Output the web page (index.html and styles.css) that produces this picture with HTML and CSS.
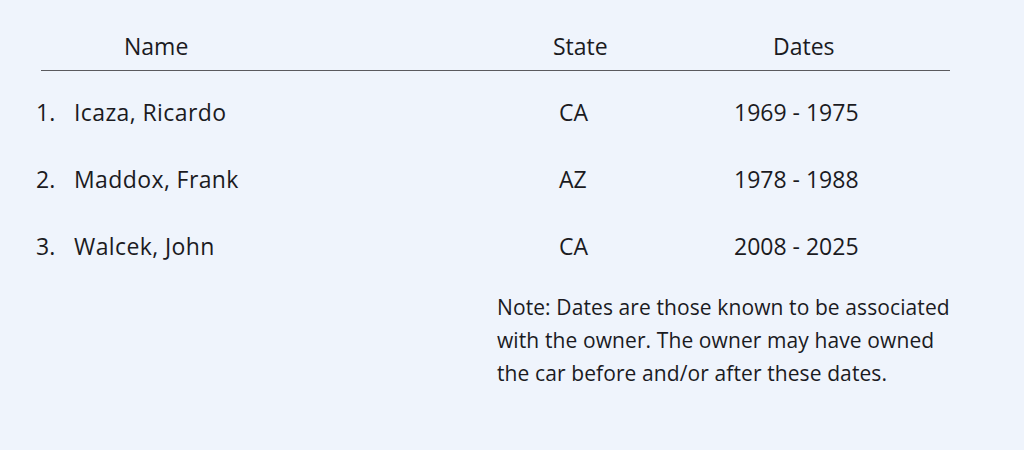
FILE: index.html
```html
<!DOCTYPE html>
<html>
<head>
<meta charset="utf-8">
<link rel="stylesheet" href="styles.css">
</head>
<body>
<div class="page">
  <div class="owners">
    <div class="head">
      <div class="h-name">Name</div>
      <div class="h-state">State</div>
      <div class="h-dates">Dates</div>
    </div>
    <div class="rule"></div>
    <div class="row"><span class="num">1.</span><span class="name">Icaza, Ricardo</span><span class="state">CA</span><span class="dates">1969 - 1975</span></div>
    <div class="row"><span class="num">2.</span><span class="name">Maddox, Frank</span><span class="state">AZ</span><span class="dates">1978 - 1988</span></div>
    <div class="row"><span class="num">3.</span><span class="name">Walcek, John</span><span class="state">CA</span><span class="dates">2008 - 2025</span></div>
  </div>
  <p class="note">Note: Dates are those known to be associated with the owner. The owner may have owned the car before and/or after these dates.</p>
</div>
</body>
</html>
```
FILE: styles.css
```css
html, body {
  margin: 0;
  padding: 0;
  background: #eff4fc;
}
body {
  font-family: "Open Sans", "Noto Sans", sans-serif;
  color: #1b1b1f;
  width: 1024px;
  height: 450px;
  overflow: hidden;
}
.page {
  padding: 29px 0 0 36px;
}
.owners {
  width: 920px;
}
.head, .row {
  display: grid;
  grid-template-columns: 38px 485px 175px 1fr;
  font-size: 23px;
  line-height: 34px;
}
.h-name {
  grid-column: 1 / 3;
  padding-left: 88px;
}
.h-state {
  margin-left: -6px;
}
.h-dates {
  padding-left: 39px;
}
.rule {
  margin: 7px 0 0 5px;
  width: 909px;
  height: 1px;
  background: #5a5a5e;
}
.row {
  height: 67px;
  align-items: center;
}
.rule + .row {
  margin-top: 7px;
}
.name {
  letter-spacing: 0.4px;
}
.note {
  margin: 12px 0 0 461px;
  width: 470px;
  font-size: 21px;
  line-height: 33px;
  letter-spacing: 0.1px;
}
```
